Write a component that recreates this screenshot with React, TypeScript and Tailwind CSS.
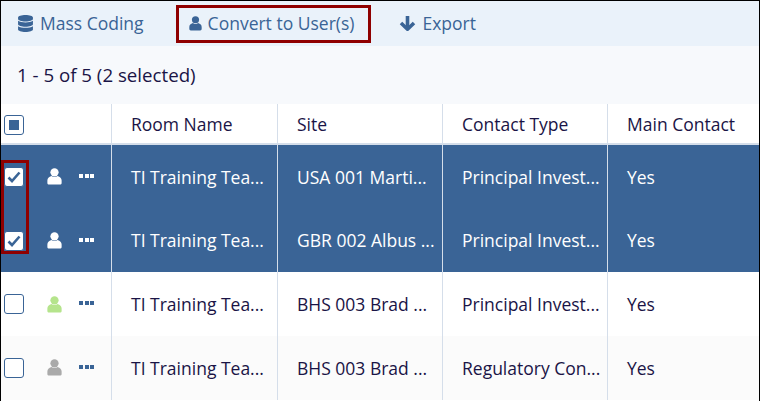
import { FaDatabase } from 'react-icons/fa';

type Row = {
  room: string;
  site: string;
  type: string;
  main: string;
  selected: boolean;
  user: string;
  bg: string;
};

const rows: Row[] = [
  { room: 'TI Training Tea...', site: 'USA 001 Marti...', type: 'Principal Invest...', main: 'Yes', selected: true, user: '#ffffff', bg: '' },
  { room: 'TI Training Tea...', site: 'GBR 002 Albus ...', type: 'Principal Invest...', main: 'Yes', selected: true, user: '#ffffff', bg: '' },
  { room: 'TI Training Tea...', site: 'BHS 003 Brad ...', type: 'Principal Invest...', main: 'Yes', selected: false, user: '#b5e48c', bg: 'bg-white' },
  { room: 'TI Training Tea...', site: 'BHS 003 Brad ...', type: 'Regulatory Con...', main: 'Yes', selected: false, user: '#aaaaaa', bg: 'bg-[#fbfbfb]' },
];

function UserIcon({ color, size = 16 }: { color: string; size?: number }) {
  return (
    <svg width={size} height={size * 1.125} viewBox="0 0 16 18" fill={color}>
      <circle cx="8" cy="4.6" r="4.4" />
      <path d="M4.8 8.6C2 9.6.4 11 .4 13.4v2.6c0 1 .8 1.7 1.8 1.7h11.6c1 0 1.8-.7 1.8-1.7v-2.6c0-2.4-1.6-3.8-4.4-4.8-.8.7-2 1.1-3.2 1.1s-2.4-.4-3.2-1.1z" />
    </svg>
  );
}

function Dots({ color }: { color: string }) {
  return (
    <span className="flex justify-between w-[15px] -translate-y-px">
      <span className="w-1 h-1" style={{ backgroundColor: color }} />
      <span className="w-1 h-1" style={{ backgroundColor: color }} />
      <span className="w-1 h-1" style={{ backgroundColor: color }} />
    </span>
  );
}

function Cell({ children, last }: { children: React.ReactNode; last?: boolean }) {
  return (
    <div className={`flex items-center pl-[19px] ${last ? '' : 'border-r border-[#d5deea]'}`}>
      <span className="whitespace-nowrap">{children}</span>
    </div>
  );
}

const gridCols = 'grid grid-cols-[111px_166px_165px_165px_1fr]';

export default function App() {
  return (
    <div className="relative w-[760px] h-[401px] overflow-hidden border border-black border-b-0 bg-white text-[17.5px] text-[#1a1446] font-['Open_Sans','Noto_Sans',sans-serif]">
      <div className="flex items-center h-[45px] bg-[#eaf2fa] text-[#3a6496]">
        <button className="flex items-center gap-[6px] ml-[16px]">
          <FaDatabase size={17} />
          Mass Coding
        </button>
        <button className="flex items-center gap-[6px] ml-[45px]">
          <UserIcon color="#3a6496" size={13} />
          Convert to User(s)
        </button>
        <button className="flex items-center gap-[6px] ml-[45px]">
          <svg width="17" height="16" viewBox="0 0 17 16" fill="none" stroke="#3a6496" strokeWidth="3.6" strokeLinejoin="round">
            <path d="M8.5 0v12" />
            <path d="M2 7l6.5 6.2L15 7" />
          </svg>
          Export
        </button>
      </div>
      <div className="flex items-center h-[58px] pl-[16px] bg-[#f7f9fc] text-[18.7px]">1 - 5 of 5 (2 selected)</div>
      <div className={`${gridCols} h-[41px] border-b-2 border-[#d5deea] bg-white [&>div]:pt-[2px]`}>
        <div className="flex items-center pl-[3px] border-r border-[#d5deea]">
          <span className="flex items-center justify-center w-5 h-5 rounded-[3px] border border-[#3a6496]">
            <span className="w-[10px] h-[10px] bg-[#3a6496]" />
          </span>
        </div>
        <Cell>Room Name</Cell>
        <Cell>Site</Cell>
        <Cell>Contact Type</Cell>
        <Cell last>Main Contact</Cell>
      </div>
      {rows.map((row, i) => (
        <div
          key={i}
          className={`${gridCols} h-[63.7px] ${row.selected ? 'bg-[#3a6496] text-white' : row.bg}`}
        >
          <div className="flex items-center pl-[3px] border-r border-[#d5deea]">
            {row.selected ? (
              <span className="flex items-center justify-center w-5 h-5 rounded-[3px] border border-[#3a6496] bg-white">
                <svg width="14" height="12" viewBox="0 0 14 12" fill="none" stroke="#3a6496" strokeWidth="2.6">
                  <path d="M1.5 6.5l3.5 3.5 7.5-8.5" />
                </svg>
              </span>
            ) : (
              <span className="w-5 h-5 rounded-[3px] border border-[#3a6496] bg-white" />
            )}
            <span className="ml-[23px] w-[32px]">
              <UserIcon color={row.user} size={15} />
            </span>
            <Dots color={row.selected ? '#ffffff' : '#3a6496'} />
          </div>
          <Cell>{row.room}</Cell>
          <Cell>{row.site}</Cell>
          <Cell>{row.type}</Cell>
          <Cell last>{row.main}</Cell>
        </div>
      ))}
      {/* red callouts drawn over the screenshot */}
      <div className="absolute left-[175px] top-[4px] w-[195px] h-[38px] border-[3px] border-[#8f0000]" />
      <div className="absolute left-0 top-[159px] w-[28px] h-[94px] border-[3px] border-[#8f0000]" />
    </div>
  );
}
